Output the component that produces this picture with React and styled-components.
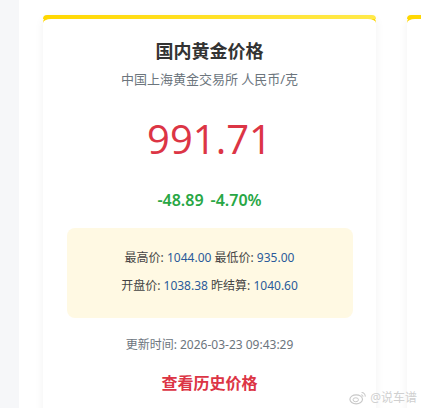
import React from "react";
import styled, { createGlobalStyle } from "styled-components";

const GlobalStyle = createGlobalStyle`
  html, body {
    margin: 0;
    padding: 0;
    background: #f6f7f9;
    font-family: "Noto Sans", "Noto Sans CJK SC", sans-serif;
  }
`;

const cards = [
  {
    title: "国内黄金价格",
    subtitle: "中国上海黄金交易所 人民币/克",
    price: "991.71",
    change: "-48.89",
    percent: "-4.70%",
    rows: [
      [
        ["最高价", "1044.00"],
        ["最低价", "935.00"],
      ],
      [
        ["开盘价", "1038.38"],
        ["昨结算", "1040.60"],
      ],
    ],
    time: "2026-03-23 09:43:29",
  },
];

const App = () => {
  return (
    <>
      <GlobalStyle />
      <Page>
        <Side />
        <Main>
          <CardRow>
            {cards.map((c, idx) => (
              <Card key={idx}>
                <Title>{c.title}</Title>
                <Subtitle>{c.subtitle}</Subtitle>
                <Price>{c.price}</Price>
                <Change>
                  <span>{c.change}</span>
                  <span>{c.percent}</span>
                </Change>
                <InfoBox>
                  {c.rows.map((row, i) => (
                    <InfoLine key={i}>
                      {row.map(([label, value], j) => (
                        <span key={j}>
                          {label}: <Value>{value}</Value>
                          {j === 0 ? " " : ""}
                        </span>
                      ))}
                    </InfoLine>
                  ))}
                </InfoBox>
                <UpdateTime>更新时间: {c.time}</UpdateTime>
                <HistoryLink>查看历史价格</HistoryLink>
              </Card>
            ))}
            <Card />
          </CardRow>
          <Watermark>
            <WeiboIcon viewBox="0 0 20 16">
              <ellipse cx="8" cy="10" rx="7" ry="5" fill="none" stroke="#c8c8c8" strokeWidth="1.3" />
              <ellipse cx="7.5" cy="10.5" rx="3" ry="2.2" fill="none" stroke="#c8c8c8" strokeWidth="1.1" />
              <path d="M14 2.5 a4 4 0 0 1 4 4.5" fill="none" stroke="#c8c8c8" strokeWidth="1.2" />
              <path d="M13.5 5 a2 2 0 0 1 2 2.2" fill="none" stroke="#c8c8c8" strokeWidth="1.1" />
            </WeiboIcon>
            @说车谱
          </Watermark>
        </Main>
      </Page>
    </>
  );
};

const Page = styled.div`
  display: flex;
  height: 408px;
  overflow: hidden;
`;

const Side = styled.div`
  width: 19px;
  flex-shrink: 0;
  background: #f6f7f9;
`;

const Main = styled.div`
  position: relative;
  flex: 1;
  background: #ffffff;
  padding: 15px 0 0 24px;
  overflow: hidden;
`;

const CardRow = styled.div`
  display: flex;
  gap: 31px;
`;

const Card = styled.div`
  width: 333px;
  height: 420px;
  flex-shrink: 0;
  box-sizing: border-box;
  background: #fff;
  border-radius: 8px;
  border-top: 4px solid #ffd700;
  box-shadow: 0 2px 10px rgba(0, 0, 0, 0.06);
  padding-top: 20px;
  display: flex;
  flex-direction: column;
  align-items: center;
  position: relative;
  &::before {
    content: "";
    position: absolute;
    top: -4px;
    left: 0;
    right: 0;
    height: 4px;
    border-radius: 8px 8px 0 0;
    background: linear-gradient(90deg, #ffd700, #ffe94a);
  }
`;

const Title = styled.div`
  font-size: 18px;
  font-weight: 700;
  color: #333;
  line-height: 24px;
`;

const Subtitle = styled.div`
  margin-top: 7px;
  font-size: 13px;
  color: #6c757d;
  line-height: 18px;
`;

const Price = styled.div`
  margin-top: 26px;
  font-size: 40px;
  color: #dc3545;
  line-height: 50px;
  font-family: "Open Sans", "Noto Sans", sans-serif;
`;

const Change = styled.div`
  margin-top: 25px;
  display: flex;
  gap: 7px;
  font-size: 16px;
  font-weight: 600;
  color: #28a745;
  line-height: 22px;
`;

const InfoBox = styled.div`
  margin-top: 17px;
  width: 286px;
  height: 90px;
  box-sizing: border-box;
  background: #fff9e3;
  border-radius: 8px;
  padding: 21px 0 0;
  display: flex;
  flex-direction: column;
  align-items: center;
  gap: 10px;
`;

const InfoLine = styled.div`
  font-size: 12px;
  line-height: 18px;
  color: #444;
`;

const Value = styled.span`
  color: #2a5a9a;
`;

const UpdateTime = styled.div`
  margin-top: 18px;
  font-size: 12px;
  color: #6c757d;
  line-height: 18px;
`;

const HistoryLink = styled.div`
  margin-top: 18px;
  font-size: 16px;
  font-weight: 700;
  color: #dc3545;
  line-height: 22px;
  cursor: pointer;
`;

const Watermark = styled.div`
  position: absolute;
  right: 4px;
  bottom: 2px;
  display: flex;
  align-items: center;
  gap: 3px;
  font-size: 12px;
  color: #d0d0d0;
`;

const WeiboIcon = styled.svg`
  width: 18px;
  height: 15px;
`;

export default App;
